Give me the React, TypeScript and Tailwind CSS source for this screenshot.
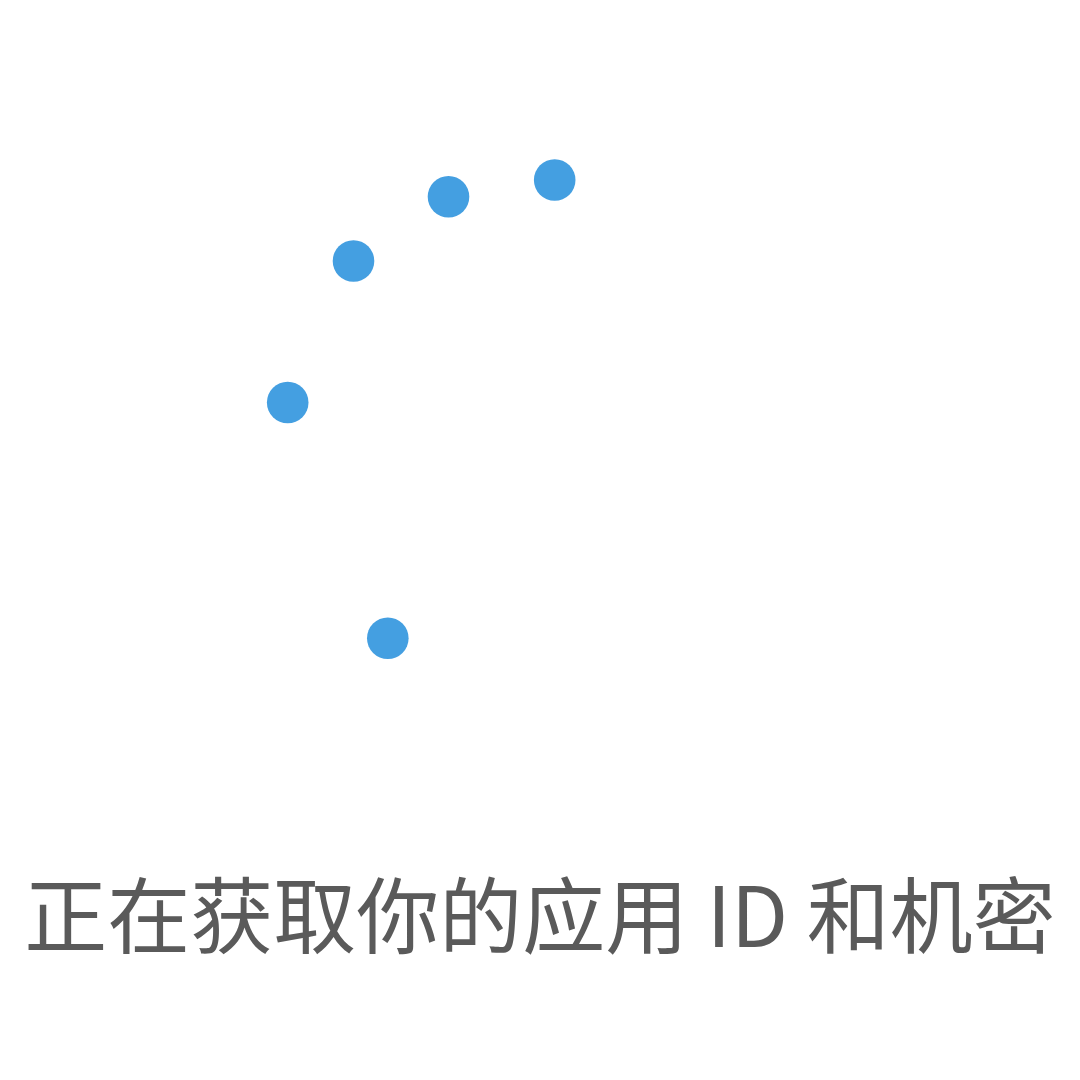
import React from 'react';

const dots = [
  { x: 554.7, y: 180 },
  { x: 448.5, y: 196.7 },
  { x: 353.5, y: 261 },
  { x: 287.7, y: 402.5 },
  { x: 387.8, y: 638.3 },
];

const App = () => {
  return (
    <div className="w-[1080px] h-[1080px] bg-white flex flex-col overflow-hidden">
      {/* Spinner dots */}
      <svg className="w-[1080px] h-[870px] shrink-0" viewBox="0 0 1080 870">
        {dots.map((d, i) => (
          <circle key={i} cx={d.x} cy={d.y} r={20.8} fill="#449fe1" />
        ))}
      </svg>

      <p
        className="text-center text-[83px] leading-none text-[#5a5a5a] whitespace-nowrap"
        style={{ fontFamily: '"Noto Sans CJK SC", "Noto Sans", sans-serif' }}
      >
        正在获取你的应用 ID 和机密
      </p>
    </div>
  );
};

export default App;
